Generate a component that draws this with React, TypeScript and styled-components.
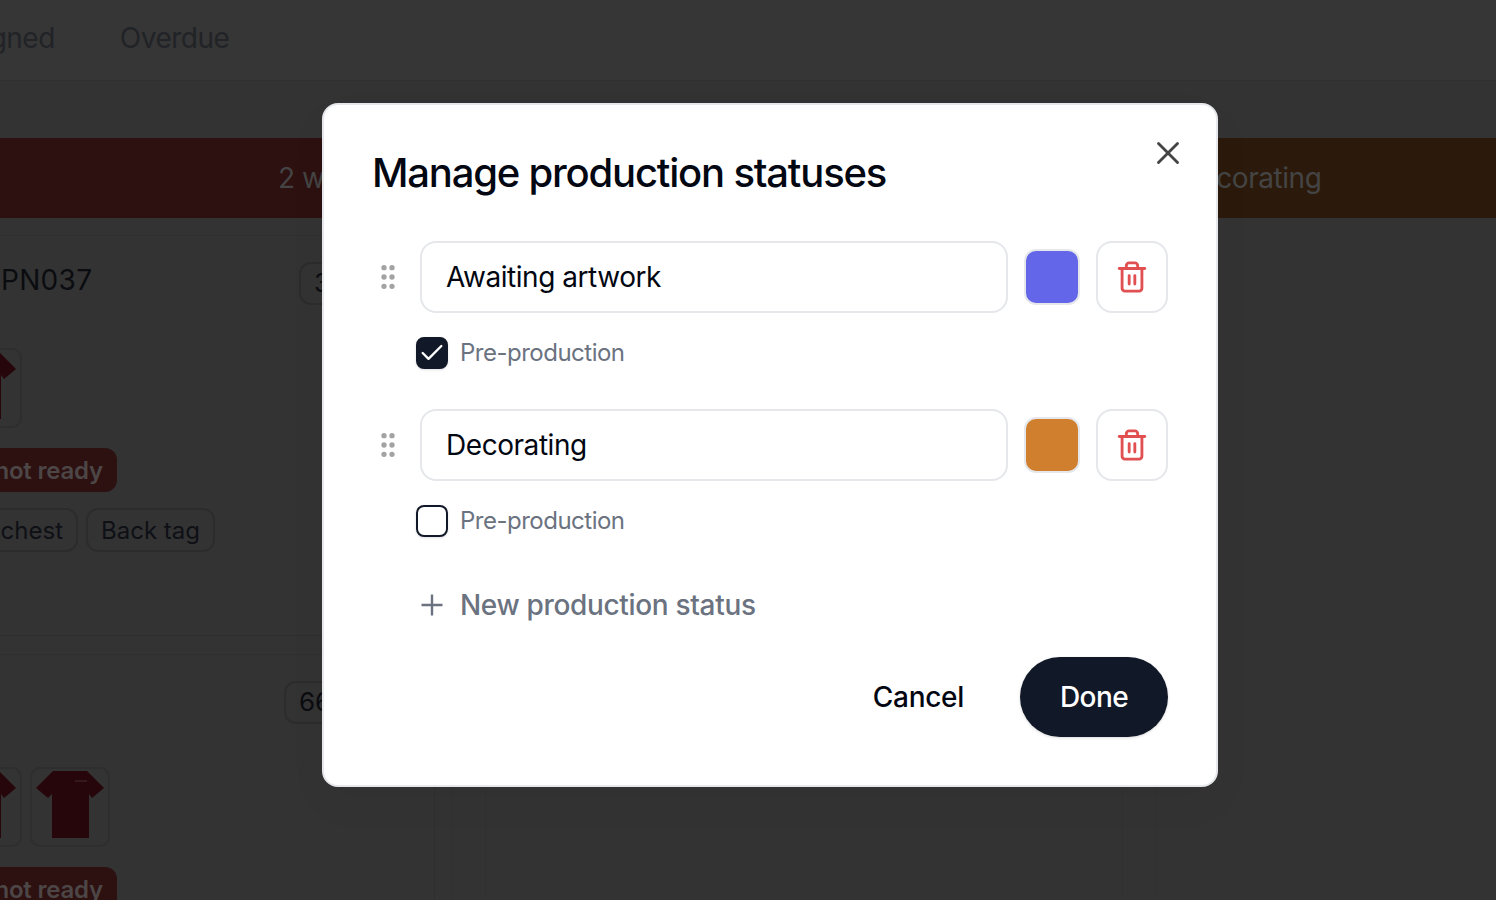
import React from 'react';
import styled, { createGlobalStyle } from 'styled-components';
import { Check, GripVertical, Trash2, X } from 'lucide-react';

const GlobalStyle = createGlobalStyle`
  * { box-sizing: border-box; }
  html, body { margin: 0; padding: 0; background: #333333; }
  body { font-family: Inter, "Liberation Sans", sans-serif; }
`;

const Page = styled.div`
  position: relative;
  width: 1496px;
  height: 900px;
  overflow: hidden;
  background: #333333;
`;

const TopBar = styled.header`
  display: flex;
  gap: 65px;
  height: 81px;
  padding: 19px 0 0;
  margin-left: -64px;
  background: #363636;
  border-bottom: 1px solid #2f2f2f;
`;

const Tab = styled.span`
  font-size: 28px;
  line-height: 38px;
  letter-spacing: -0.5px;
  color: #212327;
`;

const Board = styled.main`
  width: 1596px;
  margin-left: -100px;
  padding-top: 57px;
`;

const BandRow = styled.div`
  display: flex;
  justify-content: space-between;
`;

const Band = styled.div<{ $color: string; $width: number }>`
  display: flex;
  align-items: center;
  justify-content: center;
  width: ${p => p.$width}px;
  height: 80px;
  background: ${p => p.$color};
  font-size: 28px;
  letter-spacing: -0.45px;
  color: #444444;
`;

const Columns = styled.div`
  display: flex;
  height: 700px;
`;

const JobColumn = styled.section`
  width: 535px;
  padding-top: 17px;
  border-right: 1px solid #2e2e2e;
`;

const OrderCard = styled.article`
  height: 401px;
  padding: 26px 0 0 42px;
  border-top: 1px solid #2f2f2f;
  border-bottom: 1px solid #2e2e2e;

  & + & {
    height: 500px;
    margin-top: 18px;
    border-bottom: 0;
  }
`;

const CardHead = styled.div`
  display: flex;
  align-items: center;
  justify-content: space-between;
  height: 42px;
`;

const OrderNo = styled.h3`
  margin: -6px 0 0 59px;
  font-size: 28px;
  font-weight: 400;
  letter-spacing: 0.3px;
  color: #0b0c10;
`;

const Qty = styled.span<{ $width: number }>`
  display: flex;
  align-items: center;
  width: ${p => p.$width}px;
  height: 43px;
  padding: 0 0 2px 13px;
  margin-right: 75px;
  border: 2px solid #2c2c2c;
  border-radius: 12px;
  font-size: 26px;
  color: #0b0c10;
`;

const Thumbs = styled.div`
  display: flex;
  gap: 8px;
  margin-top: 44px;
`;

const Thumb = styled.div`
  display: flex;
  justify-content: center;
  width: 80px;
  height: 80px;
  padding-top: 2px;
  border: 2px solid #2e2e2e;
  border-radius: 10px;
`;

const Chip = styled.div`
  display: flex;
  align-items: center;
  justify-content: flex-end;
  width: 175px;
  height: 44px;
  margin-top: 20px;
  padding-right: 14px;
  border-radius: 12px;
  background: #2d1010;
  font-size: 24px;
  font-weight: 600;
  letter-spacing: -0.2px;
  white-space: nowrap;
  color: #4c4646;
`;

const TagRow = styled.div`
  display: flex;
  gap: 8px;
  margin-top: 16px;
`;

const Tag = styled.span<{ $width: number }>`
  display: flex;
  align-items: center;
  justify-content: flex-end;
  width: ${p => p.$width}px;
  height: 44px;
  padding: 0 13px;
  border: 2px solid #2c2c2c;
  border-radius: 12px;
  font-size: 24px;
  white-space: nowrap;
  color: #0e1016;
`;

const MiddleColumn = styled.section`
  display: flex;
  justify-content: center;
  width: 706px;
  margin-left: 16px;
  border-left: 1px solid #303030;
  border-right: 1px solid #313131;
`;

const MiddleCard = styled.div`
  width: 638px;
  border-left: 1px solid #313131;
  border-right: 1px solid #313131;
`;

const Overlay = styled.div`
  position: absolute;
  inset: 0;
  display: flex;
  align-items: flex-start;
  padding: 103px 0 0 322px;
`;

const Dialog = styled.div`
  position: relative;
  width: 896px;
  height: 684px;
  padding: 48px;
  background: #ffffff;
  border: 2px solid #e5e7eb;
  border-radius: 16px;
  box-shadow: 0 16px 40px rgba(0, 0, 0, 0.04);
`;

const Title = styled.h2`
  margin: 0 0 48px;
  font-size: 40px;
  line-height: 40px;
  font-weight: 500;
  letter-spacing: -1.2px;
  color: #030712;
`;

const CloseButton = styled.button`
  position: absolute;
  top: 29px;
  right: 29px;
  display: flex;
  padding: 0;
  border: 0;
  background: none;
  color: #454545;
`;

const StatusList = styled.div`
  display: flex;
  flex-direction: column;
  gap: 40px;
`;

const StatusBlock = styled.div`
  display: flex;
  flex-direction: column;
  gap: 24px;
`;

const StatusRow = styled.div`
  display: flex;
  align-items: center;
  gap: 16px;
`;

const Handle = styled.span`
  display: flex;
  justify-content: center;
  width: 32px;
  color: #a3a3a3;
`;

const NameField = styled.div`
  display: flex;
  align-items: center;
  width: 588px;
  height: 72px;
  padding: 0 24px;
  border: 2px solid #e5e7eb;
  border-radius: 16px;
  font-size: 28px;
  letter-spacing: -0.45px;
  color: #030712;
`;

const Swatch = styled.div<{ $color: string }>`
  width: 56px;
  height: 56px;
  background: ${p => p.$color};
  border: 2px solid #e5e7eb;
  border-radius: 12px;
`;

const DeleteButton = styled.button`
  display: flex;
  align-items: center;
  justify-content: center;
  width: 72px;
  height: 72px;
  padding: 0;
  background: #ffffff;
  border: 2px solid #e5e7eb;
  border-radius: 16px;
  color: #e05050;
`;

const CheckRow = styled.label`
  display: flex;
  align-items: center;
  gap: 12px;
  margin-left: 44px;
  font-size: 24px;
  line-height: 32px;
  letter-spacing: -0.5px;
  color: #6b7280;
`;

const CheckBox = styled.span<{ $checked?: boolean }>`
  display: flex;
  align-items: center;
  justify-content: center;
  width: 32px;
  height: 32px;
  color: #ffffff;
  background: ${p => (p.$checked ? '#111827' : '#ffffff')};
  border: 2px solid #111827;
  border-radius: 8px;
  box-shadow: 0 1px 3px rgba(0, 0, 0, 0.12);
`;

const AddRow = styled.button`
  display: flex;
  align-items: center;
  gap: 16px;
  height: 32px;
  margin: 52px 0 0 48px;
  padding: 0;
  border: 0;
  background: none;
  font-family: inherit;
  font-size: 28px;
  font-weight: 500;
  letter-spacing: -0.33px;
  color: #6b7280;
`;

const Footer = styled.div`
  display: flex;
  align-items: center;
  justify-content: flex-end;
  gap: 56px;
  margin-top: 36px;
`;

const CancelButton = styled.button`
  padding: 0;
  border: 0;
  background: none;
  font-family: inherit;
  font-size: 28px;
  font-weight: 500;
  letter-spacing: -0.3px;
  color: #030712;
`;

const DoneButton = styled.button`
  width: 148px;
  height: 80px;
  padding: 0;
  border: 0;
  border-radius: 40px;
  background: #111827;
  box-shadow: 0 1px 3px rgba(0, 0, 0, 0.15);
  font-family: inherit;
  font-size: 28px;
  font-weight: 500;
  letter-spacing: -0.6px;
  color: #ffffff;
`;

const Shirt: React.FC = () => (
  <svg width="68" height="68" viewBox="0 0 68 68" aria-hidden="true">
    <path d="M17 0H51L68 17L56 27L53 23V67H16V23L12 27L0 17Z" fill="#26060a" />
    <path d="M39 10H51" stroke="#3a2224" strokeWidth="1.5" />
  </svg>
);

const PlusIcon: React.FC = () => (
  <svg width="24" height="24" viewBox="0 0 24 24" fill="none" stroke="currentColor" strokeWidth="2.4" aria-hidden="true">
    <path d="M12 1.5v21M1.5 12h21" />
  </svg>
);

const statuses = [
  { name: 'Awaiting artwork', color: '#6366e8', pre: true },
  { name: 'Decorating', color: '#cf7f2e', pre: false },
];

const App: React.FC = () => (
  <Page>
    <GlobalStyle />
    <TopBar>
      <Tab>Assigned</Tab>
      <Tab>Overdue</Tab>
    </TopBar>
    <Board>
      <BandRow>
        <Band $color="#2d1010" $width={934}>2 work orders</Band>
        <Band $color="#2b1a0b" $width={490}>Decorating</Band>
      </BandRow>
      <Columns>
        <JobColumn>
          <OrderCard>
            <CardHead>
              <OrderNo>PN037</OrderNo>
              <Qty $width={60}>32</Qty>
            </CardHead>
            <Thumbs>
              <Thumb><Shirt /></Thumb>
            </Thumbs>
            <Chip>Blanks not ready</Chip>
            <TagRow>
              <Tag $width={136}>Left chest</Tag>
              <Tag $width={129}>Back tag</Tag>
            </TagRow>
          </OrderCard>
          <OrderCard>
            <CardHead>
              <span />
              <Qty $width={75}>66</Qty>
            </CardHead>
            <Thumbs>
              <Thumb><Shirt /></Thumb>
              <Thumb><Shirt /></Thumb>
            </Thumbs>
            <Chip>Blanks not ready</Chip>
          </OrderCard>
        </JobColumn>
        <MiddleColumn>
          <MiddleCard />
        </MiddleColumn>
      </Columns>
    </Board>
    <Overlay>
      <Dialog>
        <CloseButton aria-label="Close">
          <X size={38} strokeWidth={1.8} />
        </CloseButton>
        <Title>Manage production statuses</Title>
        <StatusList>
          {statuses.map(status => (
            <StatusBlock key={status.name}>
              <StatusRow>
                <Handle><GripVertical size={32} /></Handle>
                <NameField>{status.name}</NameField>
                <Swatch $color={status.color} />
                <DeleteButton aria-label="Delete">
                  <Trash2 size={34} />
                </DeleteButton>
              </StatusRow>
              <CheckRow>
                <CheckBox $checked={status.pre}>
                  {status.pre && <Check size={28} />}
                </CheckBox>
                Pre-production
              </CheckRow>
            </StatusBlock>
          ))}
        </StatusList>
        <AddRow>
          <PlusIcon />
          New production status
        </AddRow>
        <Footer>
          <CancelButton>Cancel</CancelButton>
          <DoneButton>Done</DoneButton>
        </Footer>
      </Dialog>
    </Overlay>
  </Page>
);

export default App;
